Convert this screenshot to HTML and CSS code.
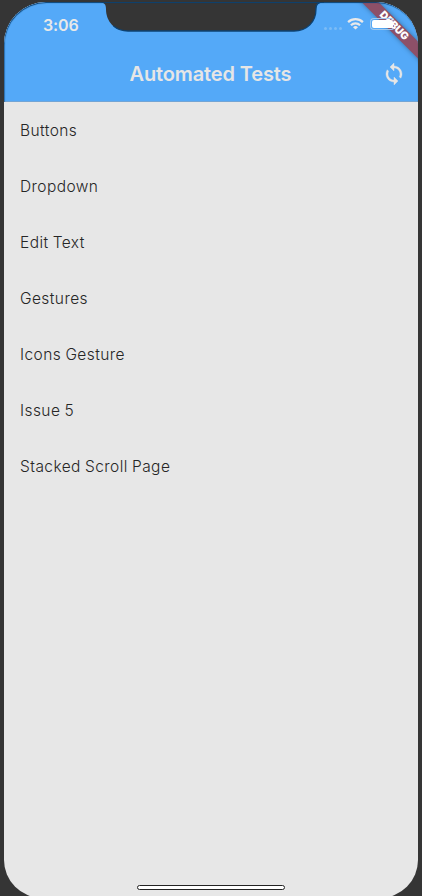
FILE: index.html
```html
<!DOCTYPE html>
<html lang="en">
<head>
<meta charset="utf-8">
<title>Automated Tests</title>
<link rel="stylesheet" href="styles.css">
</head>
<body>
<main class="screen">
  <header class="top">
    <div class="status">
      <span class="time">3:06</span>
      <div class="indicators">
        <span class="dots"><i></i><i></i><i></i><i></i></span>
        <svg class="wifi" width="17" height="13" viewBox="0 0 17 13" fill="none" stroke="#e9e9e9" stroke-width="2.2">
          <path d="M1.1 5.1a10.6 10.6 0 0 1 14.8 0"/>
          <path d="M3.9 8.2a6.6 6.6 0 0 1 9.2 0"/>
          <path d="M8.5 12.6 6 10.2a3.7 3.7 0 0 1 5 0z" fill="#e9e9e9" stroke="none"/>
        </svg>
        <span class="battery"><b></b></span>
      </div>
    </div>
    <div class="bar">
      <h1>Automated Tests</h1>
      <svg class="sync" width="24" height="24" viewBox="0 0 24 24" fill="#e6e6e6" stroke="#e6e6e6" stroke-width=".4">
        <path d="M12 4V1L8 5l4 4V6c3.310 0 6 2.690 6 6 0 1.010-.25 1.970-.7 2.800l1.460 1.460C19.540 15.030 20 13.570 20 12c0-4.420-3.580-8-8-8zm0 14c-3.310 0-6-2.690-6-6 0-1.010.25-1.970.7-2.800L5.240 7.740C4.460 8.970 4 10.430 4 12c0 4.420 3.580 8 8 8v3l4-4-4-4v3z"/>
      </svg>
    </div>
  </header>
  <ul class="list">
    <li>Buttons</li>
    <li>Dropdown</li>
    <li>Edit Text</li>
    <li>Gestures</li>
    <li>Icons Gesture</li>
    <li>Issue 5</li>
    <li>Stacked Scroll Page</li>
  </ul>
  <svg class="notch" width="226" height="31" viewBox="0 0 226 31">
    <path d="M0 0H226C220 0 218 2 218 7C218 20 209 29 196 29H30C17 29 8 20 8 7C8 2 6 0 0 0Z" fill="#353535"/>
    <path d="M226 .2C220 .2 218 2 218 7C218 20 209 29 196 29H30C24 29 19 27 15.500 24" fill="none" stroke="#0c4272" stroke-width="1.300"/>
  </svg>
  <div class="banner">DEBUG</div>
  <div class="home"></div>
</main>
</body>
</html>
```
FILE: styles.css
```css
* { box-sizing: border-box; }
body {
  margin: 0;
  height: 896px;
  overflow: hidden;
  padding: 2px 4px 0;
  background: #353535;
  font-family: Inter, "Liberation Sans", sans-serif;
}
.screen {
  position: relative;
  width: 414px;
  height: 896px;
  overflow: hidden;
  border-radius: 42px 42px 38px 38px;
  background: #e7e7e7;
}
.screen::after {
  content: "";
  position: absolute;
  inset: 0;
  height: 100px;
  border-radius: 42px 42px 0 0;
  box-shadow: inset 0.500px 1px 1px #0c4272;
  pointer-events: none;
}
.top {
  height: 100px;
  background: #54a9f8;
  border-bottom: 1px solid #73a5d5;
}
.status {
  display: flex;
  justify-content: space-between;
  height: 44px;
  padding: 12px 23px 0 39px;
}
.time {
  font-size: 16px;
  line-height: 22px;
  font-weight: 600;
  letter-spacing: -0.100px;
  color: #e9e9e9;
}
.indicators {
  display: flex;
  align-items: flex-start;
  padding-top: 3px;
}
.dots {
  display: flex;
  gap: 2px;
  margin: 10px 5px 0 0;
}
.dots i {
  width: 3px;
  height: 3px;
  border-radius: 50%;
  background: #7bbcf6;
}
.wifi { margin-right: 6px; }
.battery {
  position: relative;
  z-index: 2;
  width: 25px;
  height: 12px;
  margin-top: 1px;
  padding: 1px;
  border: 1px solid #a2c9ed;
  border-right-color: transparent;
  border-radius: 4px;
}
.battery b {
  display: block;
  height: 100%;
  border-radius: 2px;
  background: #fff;
}
.bar {
  display: grid;
  grid-template-columns: 48px 1fr 48px;
  align-items: center;
  justify-items: center;
  height: 56px;
}
h1 {
  grid-column: 2;
  margin: 0 1px 0 0;
  font-size: 20px;
  line-height: 24px;
  font-weight: 600;
  letter-spacing: -0.130px;
  color: #e6e6e6;
}
.list {
  margin: 0;
  padding: 0;
  list-style: none;
}
.list li {
  display: flex;
  align-items: center;
  height: 56px;
  padding: 0 16px;
  font-size: 15.500px;
  font-weight: 300;
  letter-spacing: 0.430px;
  word-spacing: -0.600px;
  color: #262626;
}
.notch {
  position: absolute;
  left: 94px;
  top: 0;
}
.banner {
  position: absolute;
  left: 340px;
  top: 17.500px;
  width: 100px;
  height: 12px;
  transform: rotate(45deg);
  background: #8d5068;
  box-shadow: 0 0 5px rgba(0, 0, 0, 0.350);
  color: #fff;
  font-size: 10.400px;
  line-height: 12px;
  font-weight: 900;
  text-align: center;
}
.home {
  position: absolute;
  left: 133px;
  bottom: 8px;
  width: 148px;
  height: 5px;
  border: 1px solid #222;
  border-radius: 3px;
  background: #fff;
}
```
